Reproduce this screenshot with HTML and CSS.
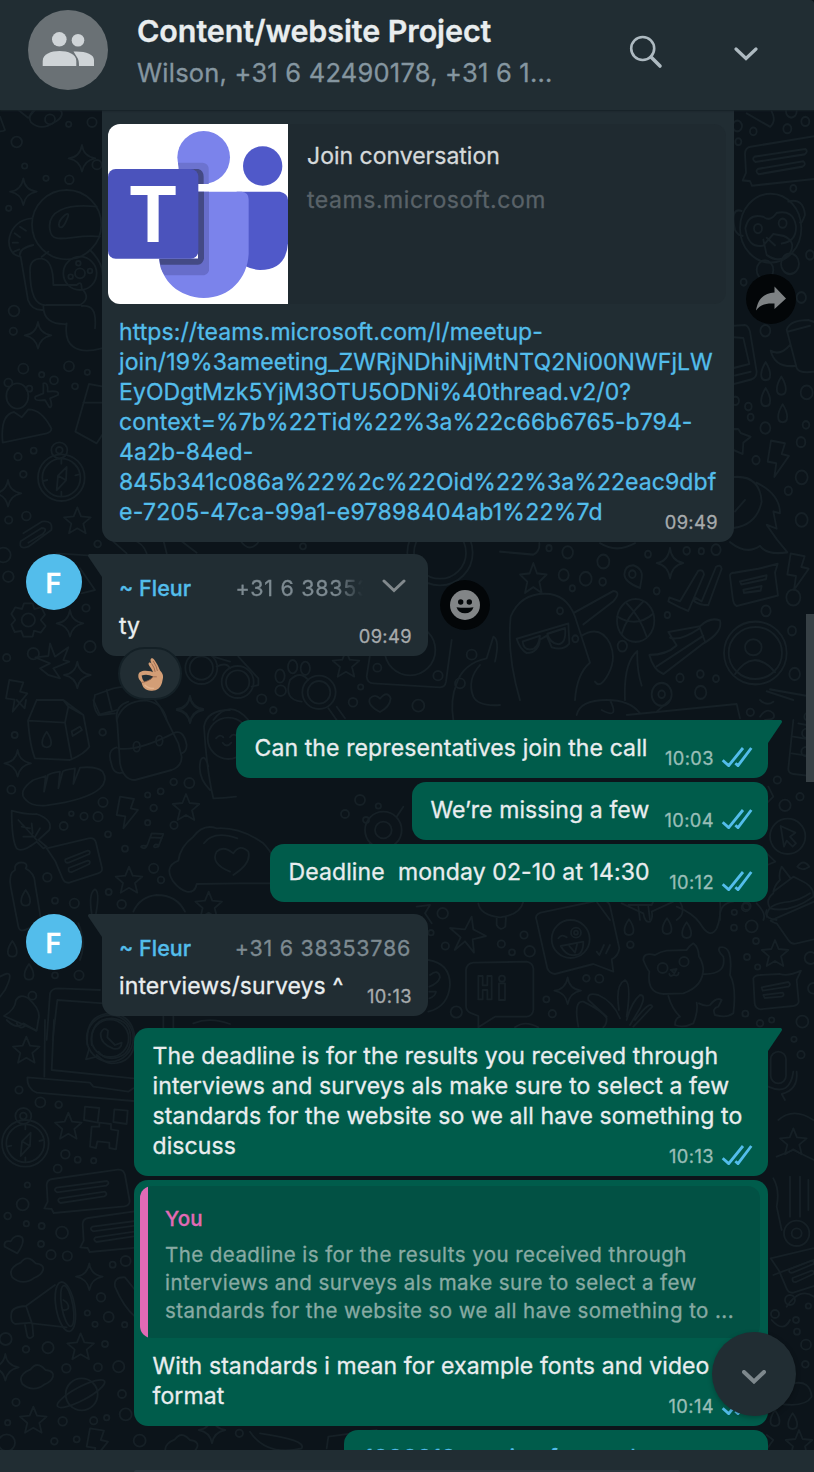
FILE: index.html
```html
<!DOCTYPE html>
<html lang="en">
<head>
<meta charset="utf-8">
<title>Content/website Project</title>
<link rel="stylesheet" href="styles.css">
</head>
<body>
<div class="app">
<header class="header">
  <svg class="group-avatar" viewBox="0 0 80 80"><circle cx="40" cy="40" r="40" fill="#6a7175"/><g fill="#cfd4d7"><circle cx="31.300000000000004" cy="29.3" r="7.3"/><circle cx="50" cy="30.3" r="6.3"/><path d="M14.700 56V51C14.700 44 23 41 31.500 41S48.300 44 48.300 51V56Z"/><path d="M45.500 41.600C50 49 51 49 51 56H66V50C66 44 57 41 45.500 41.600Z"/></g></svg>
  <div class="header-text">
    <div class="title">Content/website Project</div>
    <div class="members">Wilson, +31 6 42490178, +31 6 1...</div>
  </div>
  <svg class="icon-search" viewBox="0 0 34 34" fill="none" stroke="#aebac1"><circle cx="13.700" cy="13.500" r="11.500" stroke-width="2.600"/><path d="M22 22L31 31" stroke-width="3.600" stroke-linecap="round"/></svg>
  <svg class="icon-down" viewBox="0 0 24 14" fill="none" stroke="#aebac1" stroke-width="3.200" stroke-linecap="round"><path d="M2 2L12 11.500L22 2"/></svg>
</header>

<main class="chat">
<svg class="wallpaper" viewBox="0 110 814 1340" fill="none" stroke="#162026" stroke-width="5.500" stroke-linejoin="round" stroke-linecap="round">
  <defs>
    <path id="star" d="M0-40L11-13L40-10L18 9L25 38L0 23L-25 38L-18 9L-40-10L-11-13Z"/>
    <path id="spark" d="M0-40Q4-6 40 0Q6 6 0 40Q-6 6-40 0Q-6-4 0-40Z"/>
    <path id="drop" d="M0-25C18 0 18 22 0 22S-18 0 0-25Z"/>
    <path id="bolt" d="M-20-45L22-38L12-10L34-5L-10 50L-4 14L-30 10Z"/>
    <path id="cloud" d="M-45 22C-60-5-30-18-20-22C0-50 20-25 25-20C65-15 45 15 20 24C0 40-25 40-45 22Z"/>
    <g id="dots"><circle cx="0" cy="0" r="15"/><circle cx="55" cy="18" r="8"/><circle cx="18" cy="60" r="9"/><circle cx="-45" cy="42" r="12"/></g>
    <g id="note"><path d="M-78-25L48-55Q66-58 70-42L88 34Q90 46 76 50L-10 78Q-24 80-30 66L-52 14Z"/><path d="M-22 8L45-18Q55-18 50-8L-12 18Q-25 20-22 8ZM-12 34L45 12Q55 12 50 22L-2 46Q-15 48-12 34Z"/></g>
    <g id="talk"><path d="M-115-20Q-114-36-98-38L98-66Q116-68 120-50L134 28Q134 42 118 44L-94 64L-100 52L-122 50L-112 30Z"/><path d="M-86-12L66-32Q76-26 64-18L-84 2Q-96-6-86-12ZM-76 20L60 0Q70 8 58 14L-74 34Q-86 26-76 20Z"/></g>
    <g id="compass"><circle cx="0" cy="0" r="70"/><circle cx="0" cy="0" r="57"/><circle cx="-6" cy="-82" r="24"/><circle cx="-6" cy="-82" r="10"/><path d="M16-32L14 8L-14 38L-10-6ZM-10-6L14 8M0-55V-42M0 55V42M-54 10L-42 7M54-10L42-7"/></g>
  </defs>
  <g transform="translate(0 110) scale(.33333)">
    <path d="M55 0L85 24L105 0M0 20L15 60Q12 64 0 64M90 20V20"/>
    <use href="#cloud" x="138" y="15" transform="translate(0 0)"/><use href="#spark" x="246" y="145"/><use href="#spark" x="70" y="245"/><use href="#spark" x="114" y="676"/><use href="#spark" x="24" y="1150"/><use href="#star" x="232" y="1232" />
    <circle cx="150" cy="28" r="15"/><circle cx="276" cy="37" r="14"/><circle cx="50" cy="96" r="16"/><circle cx="206" cy="43" r="8"/><circle cx="74" cy="168" r="8"/><circle cx="138" cy="205" r="8"/><circle cx="208" cy="209" r="13"/><circle cx="291" cy="164" r="14"/><circle cx="26" cy="295" r="8"/><circle cx="42" cy="603" r="16"/><circle cx="40" cy="664" r="11"/>
    <circle cx="200" cy="344" r="104"/><path d="M150 360C140 305 195 280 290 290M150 360C155 410 220 370 300 380M178 350Q172 335 195 315Q210 305 202 325Q188 360 178 350ZM95 325C20 330 5 430 60 440M60 350L78 362M44 370L60 382M38 398H54M42 425L58 418M60 440Q55 415 100 405M62 440L84 570Q95 602 130 600M90 480Q90 445 125 446Q160 450 160 525H230Q245 510 245 535Q275 565 240 585H140Q90 590 90 480ZM130 588Q130 645 200 642M200 640C190 710 230 735 305 715M285 655C290 600 275 585 245 588M125 440L145 425M270 420Q310 460 308 495"/>
    <circle cx="240" cy="490" r="50"/><circle cx="240" cy="490" r="15"/><circle cx="212" cy="500" r="7"/><circle cx="235" cy="460" r="7"/><circle cx="270" cy="483" r="7"/>
    <use href="#dots" x="207" y="769"/><use href="#dots" x="70" y="776"/><ellipse cx="52" cy="858" rx="33" ry="38"/><path d="M8 998Q0 915 42 906L65 922L85 898Q125 898 154 955Q155 965 140 970Z"/><path d="M130 820Q145 815 143 845Q180 840 174 855L150 865Q160 892 148 892L135 870Q100 875 106 860L130 850Z"/><path d="M310 830L267 822L226 965L290 1000L310 970M250 878H305"/>
    <use href="#compass" x="184" y="1103"/><circle cx="54" cy="1040" r="11"/><circle cx="101" cy="1022" r="9"/><circle cx="70" cy="1093" r="10"/><circle cx="79" cy="1218" r="13"/><circle cx="26" cy="1230" r="11"/><path d="M70 1270L125 1235Q160 1230 154 1260L85 1310Q55 1320 62 1294L125 1254Q145 1255 128 1272L85 1298"/>
  </g>
  <g transform="translate(0 540) scale(.33333)">
    <circle cx="10" cy="45" r="22"/><circle cx="25" cy="110" r="16"/><circle cx="293" cy="12" r="10"/><circle cx="258" cy="204" r="11"/><path d="M150 80L170 40L320 50M240 85L285 150L245 160M340 5L380 40M400 0Q430 10 440 40M490 0L500 40M540 0L590 38M720 0Q750 45 780 0"/>
    <circle cx="85" cy="240" r="20"/><path d="M72 190H98L103 207L124 202L135 224L122 240L137 258L122 278L102 272L98 290H70L64 273L44 276L34 254L46 240L34 222L46 202L66 207Z"/><use href="#spark" x="210" y="250"/><use href="#spark" x="232" y="405"/><use href="#spark" x="570" y="507"/><circle cx="270" cy="320" r="17"/><circle cx="100" cy="341" r="17"/><circle cx="20" cy="353" r="11"/>
    <path d="M150 310L165 350L205 322L190 360L208 365L160 385L180 415L145 405L120 385L150 370L106 352L145 348Z"/><use href="#bolt" x="48" y="465"/>
    <path d="M285 465L340 445M320 520L350 510M285 465Q275 500 295 525L330 515M320 450L335 510M340 445Q420 430 450 450"/>
    <circle cx="604" cy="384" r="48"/><circle cx="604" cy="384" r="35"/><circle cx="713" cy="426" r="48"/><circle cx="713" cy="426" r="35"/><path d="M650 380Q680 365 690 385M715 350L775 415V435L755 440M640 350L690 365"/>
    <ellipse cx="840" cy="408" rx="14" ry="20"/><ellipse cx="878" cy="380" rx="14" ry="20"/><ellipse cx="916" cy="385" rx="14" ry="20"/><circle cx="842" cy="452" r="16"/><path d="M870 420Q900 390 925 420M870 420Q850 480 905 485"/><circle cx="957" cy="457" r="50"/><circle cx="957" cy="457" r="34"/><path d="M985 505L1010 540M1010 500L1035 535"/><path d="M1140 516Q1100 495 1110 475Q1125 460 1140 476Q1162 450 1172 475Q1170 500 1140 516Z"/><use href="#star" x="1038" y="372"/>
    <circle cx="785" cy="477" r="14"/><circle cx="820" cy="511" r="10"/><circle cx="1059" cy="487" r="13"/><circle cx="1082" cy="441" r="8"/><path d="M1110 345L1100 410Q1102 430 1120 430L1320 442Q1335 442 1338 425L1355 300"/><circle cx="1230" cy="330" r="76"/><circle cx="1132" cy="383" r="12"/><circle cx="1314" cy="407" r="14"/><circle cx="1255" cy="497" r="18"/><path d="M1360 540Q1350 480 1370 430Q1390 370 1460 355L1480 290Q1500 300 1485 365M1440 375Q1400 420 1420 470Q1435 500 1500 495"/>
    <circle cx="1320" cy="38" r="78"/><circle cx="1320" cy="38" r="98"/><circle cx="1380" cy="430" r="15"/><circle cx="1415" cy="344" r="15"/><circle cx="909" cy="19" r="9"/>
    <path d="M640 540Q690 475 745 540M350 540Q370 480 440 482Q490 490 500 540"/>
  </g>
  <g transform="translate(0 700) scale(.33333)">
    <path d="M110 0L84 62Q90 140 105 175L210 180Q255 160 268 140L250 45L190 0M110 0H190L205 20L195 68L84 62M195 68L215 178M205 20L250 45M215 94L240 80L246 90L218 108ZM50 0L74 25L78 0M280 0L300 45L345 40"/>
    <use href="#drop" x="140" y="120"/><use href="#spark" x="53" y="190"/><use href="#spark" x="570" y="30"/>
    <path d="M385 5Q340 20 352 70L360 190Q370 240 405 240L515 210Q545 200 545 170L535 130L480 20L465 0M355 145Q410 155 520 100M350 142Q320 150 334 190Q340 225 368 218M520 100Q550 85 560 135Q560 155 545 160"/><ellipse cx="410" cy="140" rx="10" ry="15"/><ellipse cx="478" cy="122" rx="10" ry="15"/>
    <path d="M100 240Q50 275 78 300Q95 320 140 316Q260 300 300 265Q325 240 308 215Q290 198 240 203L220 252L225 205Q190 210 188 215L175 265L180 215Q150 220 144 225L132 275L137 228Z"/>
    <path d="M640 295Q620 210 612 80Q620 30 690 30M630 270Q590 230 602 180Q615 160 625 200M640 295Q670 295 708 290"/><circle cx="685" cy="115" r="62"/><path d="M648 115Q660 100 670 112M690 112Q700 97 712 110M668 128Q680 145 694 128"/>
    <circle cx="44" cy="105" r="9"/><circle cx="308" cy="97" r="10"/><circle cx="34" cy="269" r="12"/><circle cx="521" cy="246" r="10"/><circle cx="568" cy="249" r="15"/><circle cx="482" cy="274" r="9"/><circle cx="443" cy="285" r="8"/><circle cx="309" cy="307" r="14"/><circle cx="294" cy="350" r="14"/><circle cx="252" cy="349" r="11"/><circle cx="214" cy="341" r="7"/><circle cx="191" cy="378" r="12"/><circle cx="461" cy="324" r="10"/><circle cx="443" cy="368" r="8"/><circle cx="522" cy="376" r="11"/><circle cx="324" cy="403" r="9"/><circle cx="375" cy="446" r="9"/>
    <path d="M35 332Q80 345 110 342Q160 360 148 390L115 420L140 440L130 445L110 425Q65 460 50 445Q35 420 35 332ZM55 360L110 420M95 370L98 400M65 380L90 385M70 410L100 410M120 385L105 410"/>
    <use href="#bolt" x="380" y="335"/><use href="#star" x="558" y="322" /><use href="#note" x="218" y="470"/>
    <path d="M440 438Q420 435 424 442Q435 450 442 435L455 400L490 402L475 440Q460 445 462 438Q465 430 476 436M452 412L486 414"/><use href="#star" x="387" y="540"/><use href="#star" x="626" y="615"/><circle cx="461" cy="505" r="14"/><circle cx="142" cy="532" r="13"/><circle cx="483" cy="540" r="10"/><circle cx="223" cy="610" r="14"/><circle cx="165" cy="602" r="9"/><circle cx="326" cy="576" r="9"/><circle cx="365" cy="613" r="13"/>
    <path d="M720 550L590 552Q585 580 560 575Q540 570 520 545Q490 500 535 482Q540 440 580 410Q610 370 650 385Q720 380 790 430Q830 470 850 550L720 550M612 430Q640 390 712 415M690 515Q630 490 650 455Q670 435 700 460Q720 430 745 455Q755 490 700 525"/>
    <path d="M45 500Q50 485 70 488Q85 492 77 505Q105 520 105 550L123 660Q60 710 55 680L32 560Q25 520 45 510Z"/><use href="#drop" x="77" y="595"/><path d="M275 640Q265 580 285 568Q300 575 288 640M400 635Q420 590 470 585Q530 585 555 635"/><use href="#drop" x="37" y="748"/><use href="#drop" x="87" y="817"/><circle cx="237" cy="826" r="14"/><circle cx="165" cy="826" r="9"/>
    <path d="M235 670Q260 730 240 780M0 830Q50 800 15 870L0 890M85 895Q125 930 115 960L110 992L12 948Q45 930 48 900Q60 880 85 895M50 970Q60 990 75 978M140 1020L150 880Q155 865 175 865L300 870M158 1020L172 900L310 910M490 950V1020M520 950V1020M580 970Q630 950 690 972"/><circle cx="97" cy="887" r="12"/><circle cx="330" cy="1015" r="70"/><circle cx="330" cy="1015" r="56"/>
  </g>
  <g transform="translate(0 1020) scale(.33333)">
    <path d="M135 0L133 170M162 0L155 150L400 175M400 205L385 215L280 200L270 188L82 172Q80 205 110 218L400 243M290 110L258 118L268 85M302 40Q310 18 324 32L322 52L345 75L365 68Q365 90 340 86Q300 70 302 40ZM20 0Q50 30 70 10L108 32"/><path d="M262 75Q255-20 335-20Q400-15 405 60Q400 130 335 130Q315 130 290 105"/><path d="M275 75Q270-5 335-5Q395 0 392 60Q388 112 335 115Q310 115 295 95"/>
    <use href="#star" x="79" y="90"/><use href="#star" x="205" y="318"/><use href="#compass" x="76" y="370"/><path d="M255 260L298 264L293 308L252 300ZM343 268L383 272L380 312L340 306ZM275 320H298V308L333 312V328L355 332L348 388L328 384V368L292 364L288 384L270 380Z"/>
    <circle cx="121" cy="247" r="15"/><circle cx="57" cy="210" r="11"/><circle cx="176" cy="254" r="10"/><circle cx="196" cy="403" r="13"/><circle cx="233" cy="419" r="9"/><circle cx="281" cy="422" r="8"/><circle cx="173" cy="446" r="12"/><circle cx="68" cy="553" r="18"/><circle cx="82" cy="495" r="8"/><circle cx="23" cy="588" r="10"/><circle cx="79" cy="611" r="8"/><circle cx="125" cy="618" r="9"/><circle cx="186" cy="638" r="18"/><circle cx="123" cy="672" r="9"/><circle cx="153" cy="704" r="14"/><circle cx="202" cy="708" r="14"/><circle cx="377" cy="723" r="15"/><circle cx="338" cy="734" r="9"/>
    <use href="#talk" x="255" y="515"/><use href="#talk" x="363" y="632"/><path d="M52 700L14 680Q10 660 32 664Q45 640 66 652Q76 665 52 700Z"/><use href="#cloud" x="82" y="750"/><use href="#spark" x="268" y="770"/>
    <path d="M78 858L165 795M95 910L200 922M78 858L95 908L45 912Q30 905 34 880Q36 860 78 858ZM75 915L82 950Q90 960 100 948L97 912M190 840Q208 850 205 865Q198 872 190 870"/><ellipse cx="196" cy="860" rx="28" ry="75" transform="rotate(-10 196 860)"/><ellipse cx="202" cy="858" rx="17" ry="62" transform="rotate(-10 202 858)"/>
    <path d="M405 890Q370 860 345 800Q340 770 375 772L405 810"/><circle cx="303" cy="832" r="13"/><circle cx="262" cy="879" r="8"/><circle cx="326" cy="891" r="15"/><circle cx="285" cy="913" r="8"/><circle cx="374" cy="914" r="8"/><circle cx="17" cy="957" r="18"/><circle cx="144" cy="983" r="17"/><circle cx="78" cy="988" r="10"/><circle cx="315" cy="972" r="9"/><use href="#star" x="242" y="980"/><use href="#spark" x="16" y="1042"/><use href="#cloud" x="112" y="1070"/><circle cx="199" cy="1045" r="13"/><circle cx="294" cy="1042" r="12"/><circle cx="356" cy="1040" r="17"/><circle cx="245" cy="1123" r="48"/><ellipse cx="243" cy="1121" rx="80" ry="20" transform="rotate(-28 243 1121)"/><use href="#star" x="100" y="1200"/><circle cx="188" cy="1204" r="13"/><circle cx="366" cy="1122" r="12"/><circle cx="48" cy="1147" r="11"/><circle cx="377" cy="1183" r="18"/><circle cx="281" cy="1202" r="11"/><circle cx="320" cy="1193" r="8"/><circle cx="23" cy="1208" r="8"/><circle cx="20" cy="1268" r="25"/><circle cx="163" cy="1264" r="10"/><circle cx="230" cy="1258" r="9"/><use href="#bolt" x="290" y="1270"/><circle cx="419" cy="1262" r="18"/><use href="#cloud" x="545" y="1280"/><path d="M750 1235Q800 1310 905 1285Q920 1260 780 1240M980 1285L985 1250L1130 1230"/><use href="#spark" x="636" y="1230"/><circle cx="718" cy="1240" r="11"/>
  </g>
  <g transform="translate(400 900) scale(.33333)">
    <circle cx="128" cy="40" r="16"/><circle cx="93" cy="98" r="8"/><circle cx="136" cy="138" r="11"/><path d="M50 20L90 15L75 40L95 70M235 10Q240 45 300 52Q360 45 370 5M290 52V75Q300 95 316 80L318 50"/>
    <path d="M215 50L220 88L258 108L218 118L222 158L195 124L164 150L182 112L150 84L195 88Z"/><path d="M410 62Q402 45 422 38L602 0Q625 0 630 18L658 145Q655 168 635 178L640 215L580 192L465 222Q448 220 442 205Z"/><circle cx="512" cy="117" r="57"/><circle cx="528" cy="98" r="15"/><circle cx="528" cy="98" r="6"/><path d="M475 115Q485 100 500 112M482 138L550 125Q550 165 525 165Q500 170 482 138ZM508 138L525 158L532 130M590 155L598 165L612 135M618 160L630 135"/>
    <path d="M220 188L380 185Q398 188 400 205V330Q398 348 380 350H285L235 382V348L215 340Q198 335 198 318V210Q200 190 220 188ZM235 228H248V256H262V228H275V298H262V270H248V298H235ZM297 250H315V300H297Z"/><circle cx="306" cy="236" r="9"/><circle cx="372" cy="105" r="11"/><circle cx="304" cy="132" r="11"/><circle cx="336" cy="157" r="9"/><circle cx="389" cy="154" r="16"/><circle cx="559" cy="235" r="10"/><circle cx="598" cy="236" r="12"/><circle cx="439" cy="298" r="9"/><circle cx="457" cy="341" r="11"/><circle cx="169" cy="336" r="17"/><use href="#spark" x="503" y="272"/>
    <path d="M85 180Q150 190 150 255Q145 320 85 335M90 225Q115 205 120 232Q115 250 88 260M88 275H108Q105 290 88 295M345 382Q375 360 415 382M535 380Q520 300 550 305Q610 335 620 355Q620 375 610 382M620 350L565 300Q560 275 595 285Q640 305 660 355M657 330Q645 255 675 240Q695 250 680 350M680 360Q695 305 720 285Q740 285 720 325L690 375M705 360Q750 300 757 320L700 380"/>
    <path d="M665 10L730 40Q735 70 750 65Q760 50 755 35L820 5M830 20Q880 40 900 70Q930 120 950 85Q965 50 960 0"/><use href="#drop" x="687" y="83"/><use href="#drop" x="801" y="80"/><use href="#drop" x="860" y="92"/><circle cx="691" cy="134" r="10"/>
    <path d="M765 165Q730 155 730 180Q740 205 748 215Q740 280 790 282L850 280Q910 260 910 205Q905 180 897 170Q895 140 880 130Q865 140 860 150L800 152Q780 155 765 165M910 222Q980 225 970 170Q950 150 960 142Q1000 135 990 225Q1010 260 1000 340Q980 355 945 345Q935 325 955 320L965 300Q950 290 930 315Q915 320 897 310M805 288Q815 325 840 350Q825 355 825 375Q850 385 880 370Q895 335 890 308"/><circle cx="788" cy="204" r="15"/><circle cx="852" cy="185" r="14"/><path d="M812 210L830 207L823 220L815 212M820 225Q810 232 808 222M822 225Q835 230 836 218"/>
    <use href="#star" x="1125" y="160"/><path d="M1060 235Q1065 225 1080 225L1140 222Q1165 230 1203 212L1190 240L1196 305Q1195 315 1180 318L1082 328Q1066 326 1064 310ZM1085 262L1165 246Q1175 254 1165 260L1088 272ZM1090 285L1148 278Q1155 286 1145 290L1094 294Z"/><path d="M1100 50Q1100 10 1170 5Q1200 0 1230-20M1112 62L1242 5M1112 62Q1125 70 1130 70L1165 120Q1175 135 1190 130L1242 118"/>
    <circle cx="1055" cy="79" r="18"/><circle cx="1002" cy="83" r="9"/><circle cx="1037" cy="22" r="12"/><circle cx="1068" cy="123" r="9"/><circle cx="1041" cy="171" r="9"/><circle cx="1073" cy="201" r="8"/><circle cx="1232" cy="174" r="18"/><circle cx="1240" cy="265" r="16"/><circle cx="1036" cy="341" r="9"/><circle cx="1080" cy="370" r="10"/><circle cx="1115" cy="360" r="8"/><circle cx="1207" cy="365" r="18"/><circle cx="1182" cy="418" r="8"/><circle cx="1203" cy="464" r="11"/><rect x="1112" y="455" width="46" height="95" rx="23"/><path d="M1105 560Q1170 590 1180 515M1190 515Q1195 570 1145 582L1155 600"/>
  </g>
  <g transform="translate(560 700) scale(.33333)">
    <path d="M50 45Q60 0 140 0M140 0Q210 0 240 40M150 0Q180 60 125 30M200 45L530 12L540 55M290 35L330 0M600 50Q620 20 640 40Q650 60 615 60M600 0Q620 20 640 5M700 60L685 205Q684 220 700 222L770 230M715 70L740 75M700 110L760 120M695 160L760 170"/><circle cx="571" cy="37" r="11"/><circle cx="740" cy="100" r="14"/><circle cx="738" cy="155" r="14"/><circle cx="745" cy="50" r="12"/>
    <circle cx="683" cy="409" r="53"/><path d="M662 378L706 398L690 410L708 430L698 440L680 422L672 440ZM625 260L640 290L620 310M620 460L646 485L622 495M712 500Q730 475 748 500Q725 515 712 500ZM665 500L692 535M665 500Q655 520 660 540Q640 560 640 580Q615 600 630 625Q690 640 760 590Q765 560 720 540L700 530L640 575M620 630Q610 655 650 660"/><circle cx="652" cy="240" r="11"/><circle cx="675" cy="316" r="17"/><circle cx="720" cy="290" r="11"/>
    <path d="M480 660Q475 610 520 605M110 605L150 660M205 615H275L280 605M235 620L240 660M265 620L270 660M350 660Q380 640 360 605M590 610Q620 640 610 660"/><circle cx="523" cy="637" r="8"/><circle cx="560" cy="618" r="12"/>
    <use href="#dots" x="-600" y="300"/><circle cx="-530" cy="390" r="55"/><circle cx="-530" cy="390" r="25"/><path d="M-570 430L-590 460M-490 350L-470 320"/>
  </g>
  <g transform="translate(500 100) scale(.33333 .3827)">
    <path d="M740 35L810 70Q830 55 815 30M702 80V80"/><circle cx="712" cy="68" r="14"/><circle cx="760" cy="82" r="10"/><circle cx="874" cy="30" r="16"/><circle cx="862" cy="75" r="12"/><circle cx="916" cy="56" r="12"/><circle cx="715" cy="109" r="9"/><use href="#talk" x="850" y="160"/>
    <ellipse cx="812" cy="335" rx="92" ry="90"/><path d="M736 335Q745 295 790 305Q810 320 830 295Q880 285 888 330Q890 370 845 375M736 335Q745 390 790 380L820 350L850 355Q890 370 870 400Q840 430 800 405L790 365M800 360L825 380M725 290Q690 280 705 340Q715 355 728 355M865 265Q910 255 915 300Q905 325 900 320"/><circle cx="774" cy="336" r="12"/><circle cx="848" cy="322" r="12"/><circle cx="795" cy="444" r="25"/><circle cx="870" cy="428" r="27"/><circle cx="880" cy="231" r="9"/><circle cx="930" cy="405" r="12"/><circle cx="731" cy="476" r="9"/><circle cx="904" cy="516" r="14"/><circle cx="796" cy="603" r="15"/>
    <path d="M702 590L735 588Q745 590 750 605L770 710Q770 725 755 730L702 742M702 620L730 622L748 690L702 700M705 720L752 710M860 600Q870 575 925 575L942 580M860 600L890 700Q895 715 942 710M865 605L930 590M870 640Q840 670 812 655Q825 700 885 695"/><use href="#drop" x="797" y="710"/><use href="#drop" x="844" y="748"/><use href="#drop" x="797" y="778"/><use href="#drop" x="848" y="820"/><circle cx="920" cy="764" r="18"/><circle cx="706" cy="786" r="11"/><circle cx="745" cy="801" r="10"/><circle cx="752" cy="829" r="9"/><circle cx="796" cy="857" r="15"/><circle cx="918" cy="849" r="10"/><circle cx="903" cy="894" r="13"/><circle cx="768" cy="941" r="11"/><path d="M702 860L715 860L722 870L752 880L730 895L728 925L702 915"/><use href="#bolt" x="833" y="935"/><circle cx="905" cy="986" r="18"/><circle cx="865" cy="1021" r="11"/><circle cx="905" cy="1097" r="18"/>
    <path d="M702 985Q780 980 785 1050Q770 1110 702 1118M735 1045L705 1075M770 1000Q840 1030 840 1080L820 1075L830 1120L800 1110Q830 1150 862 1182Q800 1190 780 1165Q740 1190 690 1155M0 1180L100 1188Q120 1180 118 1158M300 1158Q350 1185 405 1158"/>
    <use href="#star" x="100" y="1250"/><circle cx="203" cy="1182" r="16"/><circle cx="147" cy="1171" r="8"/><circle cx="310" cy="1206" r="18"/><circle cx="191" cy="1241" r="15"/><circle cx="257" cy="1251" r="18"/><circle cx="308" cy="1259" r="10"/><circle cx="217" cy="1276" r="8"/><path d="M373 1240Q375 1215 400 1216Q430 1225 425 1250L420 1275Q375 1260 373 1240Z"/><circle cx="397" cy="1239" r="10"/><use href="#spark" x="510" y="1210"/><circle cx="444" cy="1187" r="9"/><circle cx="560" cy="1178" r="10"/><circle cx="604" cy="1179" r="8"/><circle cx="648" cy="1175" r="14"/><circle cx="470" cy="1283" r="9"/>
    <path d="M508 1300L540 1310L595 1230Q610 1225 612 1240L565 1335Q535 1325 505 1310ZM585 1300L605 1310L648 1220Q662 1212 665 1225L625 1320Q600 1320 583 1310ZM690 1245Q688 1235 705 1235L775 1225L833 1212L825 1235L834 1295L710 1322Q700 1318 698 1300ZM720 1258L800 1242L798 1252L724 1266ZM730 1280L785 1270L782 1282L732 1288Z"/><use href="#bolt" x="892" y="1230"/><circle cx="880" cy="1300" r="21"/><circle cx="798" cy="1335" r="14"/>
    <path d="M60 1568Q20 1450 32 1350Q60 1290 135 1290Q200 1290 225 1350L270 1470Q230 1500 225 1568M50 1408L205 1368L208 1420Q190 1440 155 1430L140 1400L120 1410Q115 1445 80 1445Q60 1435 50 1408ZM68 1415L120 1400Q115 1435 90 1436Q70 1435 68 1415ZM142 1395L195 1380Q200 1420 175 1422Q150 1420 142 1395ZM222 1340L340 1283Q365 1285 340 1310L250 1370M245 1400Q300 1370 330 1420Q350 1460 325 1500Q300 1540 285 1520M375 1568Q370 1470 412 1440Q410 1490 425 1530"/><circle cx="407" cy="1360" r="56"/><path d="M352 1350Q410 1380 460 1342M380 1315Q420 1350 440 1402M430 1310Q380 1350 365 1395"/><circle cx="367" cy="1427" r="14"/><circle cx="502" cy="1346" r="8"/><circle cx="180" cy="1335" r="9"/><circle cx="226" cy="1408" r="9"/>
    <path d="M505 1390L600 1375Q630 1350 660 1360Q670 1390 610 1420L490 1500Q460 1490 448 1450Q500 1450 530 1425ZM510 1405Q540 1415 600 1380M470 1480L610 1400M600 1380L615 1415"/><ellipse cx="766" cy="1445" rx="94" ry="82"/><ellipse cx="766" cy="1445" rx="80" ry="68"/><ellipse cx="760" cy="1430" rx="25" ry="21"/><path d="M705 1500Q760 1430 825 1495"/><circle cx="485" cy="1553" r="30"/><circle cx="485" cy="1553" r="10"/><circle cx="540" cy="1510" r="11"/><circle cx="601" cy="1500" r="10"/><circle cx="602" cy="1548" r="17"/><circle cx="648" cy="1512" r="9"/><circle cx="884" cy="1500" r="16"/><circle cx="876" cy="1387" r="12"/><path d="M810 1540L940 1560M800 1545L880 1568"/>
  </g>
  <g transform="translate(560 1100) scale(.33333)">
    <path d="M655 60Q700 20 760 60M650 170L700 150L762 180M640 235Q660 270 650 320L665 390M690 230V350M720 230V350M745 240V330M640 525L760 480M680 620Q720 560 762 590"/><use href="#star" x="700" y="125"/><circle cx="710" cy="400" r="38"/><circle cx="710" cy="400" r="15"/><use href="#note" x="710" y="500"/><use href="#dots" x="690" y="600"/><circle cx="738" cy="734" r="15"/><circle cx="711" cy="695" r="9"/><circle cx="736" cy="793" r="10"/><path d="M635 660Q670 700 690 660M700 850Q750 840 755 890Q735 925 650 910"/><use href="#drop" x="645" y="956"/><use href="#drop" x="698" y="965"/><use href="#star" x="717" y="1030"/><path d="M620 1005L640 1020L622 1045"/>
  </g>
</svg>

<section class="messages">
  <article class="bubble in link-message">
    <div class="preview">
      <svg class="teams" viewBox="54 72 540 540"><rect x="54" y="72" width="540" height="540" fill="#fff"/><circle cx="518" cy="198" r="59" fill="#5059c9"/><path d="M440 275H570Q594 280 594 300V430Q588 510 510 510Q470 508 440 480Z" fill="#5059c9"/><circle cx="341" cy="172" r="79" fill="#7b83eb"/><path d="M324 275H455Q476 277 476 298V462C472 535 420 594 341 594C265 590 215 545 208 476H324Z" fill="#7b83eb"/><path d="M264 188H338Q356 190 356 208V252H342Q292 247 266 207Z" fill="#6c73cf"/><path d="M324 275H357V512Q352 526 335 526H224Q208 505 208 476H324Z" fill="#676dca"/><path d="M286 207H325Q341 212 341 230V252H324L307 230ZM324 275H342V476Q338 493 324 494H211L208 476H324Z" fill="#444a85"/><rect x="54" y="207" width="271" height="269" rx="23" fill="#4b53bc"/><text class="teams-letter" x="119" y="427" textLength="140" lengthAdjust="spacingAndGlyphs">T</text></svg>
      <div class="preview-copy"><div class="preview-title">Join conversation</div><div class="preview-site">teams.microsoft.com</div></div>
    </div>
    <p class="url">https://teams.microsoft.com/l/meetup-<br>join/19%3ameeting_ZWRjNDhiNjMtNTQ2Ni00NWFjLW<br>EyODgtMzk5YjM3OTU5ODNi%40thread.v2/0?<br>context=%7b%22Tid%22%3a%22c66b6765-b794-<br>4a2b-84ed-<br>845b341c086a%22%2c%22Oid%22%3a%22eac9dbf<br><span class="url-end">e-7205-47ca-99a1-e97898404ab1%22%7d</span></p>
    <span class="meta">09:49</span>
    <svg class="forward" viewBox="0 0 50 50"><circle cx="25" cy="25" r="25" fill="#030608"/><path d="M10 36.500C12 25 17 19.500 28.500 18.500V12.500L40 24.500L28.500 35V29.500C19 29 14 31 10 36.500Z" fill="#7e8284"/></svg>
  </article>

  <div class="row">
    <div class="avatar">F</div>
    <article class="bubble in named">
      <svg class="tail-left" viewBox="0 0 14 23"><path d="M14 0H2C0 0-.5 1.500.5 3L14 23Z" fill="#212d33"/></svg>
      <div class="sender"><b>~ Fleur</b><span class="phone faded">+31 6 38353</span><svg class="menu" viewBox="0 0 24 14" fill="none" stroke="#82898d" stroke-width="3" stroke-linecap="round"><path d="M2 2L12 11.500L22 2"/></svg></div>
      <p class="text">ty</p><span class="meta">09:49</span>
      <svg class="smile" viewBox="0 0 50 50"><circle cx="25" cy="25" r="25" fill="#030608"/><circle cx="25" cy="25" r="15" fill="#828587"/><circle cx="20.700" cy="22" r="2.700" fill="#030608"/><circle cx="29.300" cy="22" r="2.700" fill="#030608"/><path d="M16.500 27.300Q25 28.300 33.500 27.300Q31.500 33.300 25 33.300T16.500 27.300Z" fill="#030608"/></svg>
      <div class="reaction"><svg class="hand" viewBox="410 348 82 106"><path d="M414 404C414 390 430 387 452 391L458 394C458 386 447 377 445 369C446 363 450 364 455 369C449 359 450 351 457 352C463 354 475 376 480 389C487 397 490 403 489 411L486 426C481 443 470 451 453 450C434 450 427 439 424 425C417 417 413 412 414 404Z" fill="#d39e76"/><path d="M424 404Q440 398 459 407Q456 416 432 424Q425 414 424 404Z" fill="#212d33"/><path d="M455 369Q464 381 465 393M459 360Q470 376 472 390M424 425Q446 423 459 408L470 408" fill="none" stroke="#94634a" stroke-width="2.500"/><path d="M433 432Q443 444 462 443" stroke="#e3b48e" stroke-width="4" fill="none"/></svg></div>
    </article>
  </div>

  <article class="bubble out first can"><svg class="tail-right" viewBox="0 0 14 23"><path d="M0 0H12C14 0 14.500 1.500 13.500 3L0 23Z" fill="#005c4b"/></svg><p class="text">Can the representatives join the call</p><span class="meta">10:03<svg class="ticks" viewBox="482 138 96 64"><path d="M487 181L505 197L548 144M525 190L533 197L573 144"/></svg></span></article>
  <article class="bubble out missing"><p class="text">We’re missing a few</p><span class="meta">10:04<svg class="ticks" viewBox="482 138 96 64"><path d="M487 181L505 197L548 144M525 190L533 197L573 144"/></svg></span></article>
  <article class="bubble out deadline"><p class="text">Deadline&nbsp; monday 02-10 at 14:30</p><span class="meta">10:12<svg class="ticks" viewBox="482 138 96 64"><path d="M487 181L505 197L548 144M525 190L533 197L573 144"/></svg></span></article>

  <div class="row second">
    <div class="avatar">F</div>
    <article class="bubble in named">
      <svg class="tail-left" viewBox="0 0 14 23"><path d="M14 0H2C0 0-.5 1.500.5 3L14 23Z" fill="#212d33"/></svg>
      <div class="sender"><b>~ Fleur</b><span class="phone">+31 6 38353786</span></div>
      <p class="text">interviews/surveys ^</p><span class="meta">10:13</span>
    </article>
  </div>

  <article class="bubble out first long"><svg class="tail-right" viewBox="0 0 14 23"><path d="M0 0H12C14 0 14.500 1.500 13.500 3L0 23Z" fill="#005c4b"/></svg><p class="text">The deadline is for the results you received through<br>interviews and surveys als make sure to select a few<br>standards for the website so we all have something to<br>discuss</p><span class="meta">10:13<svg class="ticks" viewBox="482 138 96 64"><path d="M487 181L505 197L548 144M525 190L533 197L573 144"/></svg></span></article>
  <article class="bubble out reply">
    <div class="quote"><b>You</b><p>The deadline is for the results you received through<br>interviews and surveys als make sure to select a few<br>standards for the website so we all have something to ...</p></div>
    <p class="text">With standards i mean for example fonts and video<br>format</p><span class="meta">10:14<svg class="ticks" viewBox="482 138 96 64"><path d="M487 181L505 197L548 144M525 190L533 197L573 144"/></svg></span>
  </article>
  <article class="bubble out last"><p class="text">1000019 version for read</p></article>
</section>
<div class="scrollbar"></div>
<div class="jump"><svg viewBox="0 0 24 14" fill="none" stroke="#7e888d" stroke-width="4" stroke-linecap="round"><path d="M2 2L12 11.500L22 2"/></svg></div>
</main>
<footer class="composer"><div class="field"></div></footer>
</div>
</body>
</html>
```
FILE: styles.css
```css
* { box-sizing: border-box; }
body { margin: 0; background: #0c141a; font-family: Inter, "Liberation Sans", sans-serif; -webkit-text-stroke: .3px currentColor; }
p { margin: 0; }
.app { width: 814px; height: 1472px; display: flex; flex-direction: column; overflow: hidden; }

.header { height: 110px; flex: none; display: flex; align-items: flex-start; background: #212d33; padding: 10px 0 0 28px; z-index: 2; box-shadow: 0 1px 2px #172126; border-top-right-radius: 4px; }
.group-avatar { width: 80px; height: 80px; }
.header-text { width: 492px; margin-left: 29px; white-space: nowrap; }
.title { color: #e9edef; font-size: 30.500px; font-weight: 600; line-height: 42px; letter-spacing: -.1px; }
.members { color: #8596a0; font-size: 25.500px; line-height: 42px; letter-spacing: .22px; }
.icon-search { width: 34px; height: 34px; margin-top: 25px; }
.icon-down { width: 24px; height: 14px; margin: 37px 0 0 71px; }

.chat { position: relative; height: 1340px; flex: none; overflow: hidden; background: #0c141a; }
.wallpaper { position: absolute; left: 0; top: 0; width: 814px; height: 1340px; }
.messages { position: relative; display: flex; flex-direction: column; align-items: flex-start; gap: 4px; }

.bubble { position: relative; border-radius: 14px; color: #e9edef; white-space: nowrap; }
.in { background: #212d33; }
.out { background: #005c4b; align-self: flex-end; margin-right: 46px; padding: 13px 18px 15px; }
.text { font-size: 23px; line-height: 30px; letter-spacing: .11px; }
.meta { position: absolute; right: 16px; bottom: 9px; display: flex; align-items: center; gap: 8px; font-size: 18.300px; line-height: 22px; letter-spacing: .4px; color: #a7abad; }
.out .meta { right: 15px; color: #99beb7; }
.ticks { width: 32px; height: 21.300px; margin: -3px 0 0 -1px; fill: none; stroke: #53bdeb; stroke-width: 8.500; }
.tail-left { position: absolute; left: -14px; top: 0; width: 14px; height: 23px; }
.tail-right { position: absolute; right: -14px; top: 0; width: 14px; height: 23px; }

.link-message { width: 632px; height: 432px; margin-left: 102px; padding: 14px 6px 15px; border-radius: 0 0 14px 14px; }
.preview { display: flex; height: 180px; width: 618px; border-radius: 12px; overflow: hidden; background: #1f2a30; }
.teams { width: 180px; height: 180px; }
.teams-letter { font: bold 247px "Liberation Sans", sans-serif; fill: #fff; -webkit-text-stroke: 0; }
.preview-copy { padding: 17px 0 0 19px; }
.preview-title { color: #d5d9db; font-size: 23px; line-height: 30px; letter-spacing: 0; }
.preview-site { margin-top: 14px; color: #596268; font-size: 23px; line-height: 30px; letter-spacing: .55px; }
.url { margin: 13px 0 0 11px; color: #53bdeb; font-size: 23px; line-height: 30px; letter-spacing: .08px; }
.url-end { letter-spacing: .25px; }
.forward { position: absolute; left: 644px; top: 164px; width: 50px; height: 50px; }

.row { display: flex; align-items: flex-start; gap: 20px; margin: 8px 0 0 26px; }
.avatar { width: 56px; height: 56px; padding-right: 1px; border-radius: 50%; background: #53bdeb; color: #fff; font-size: 27px; line-height: 59px; text-align: center; font-weight: 600; }
.named { width: 326px; height: 102px; padding: 19px 17px 0; border-top-left-radius: 0; }
.sender { display: flex; align-items: center; height: 30px; font-size: 21.500px; margin-bottom: 8px; }
.sender b { width: 116.500px; color: #53bdeb; font-weight: 500; }
.phone { color: #7d8a91; letter-spacing: .72px; }
.faded { width: 129px; mask-image: linear-gradient(90deg, #000 100px, transparent 127px); }
.menu { width: 24px; height: 14px; margin: -5px 0 0 17.500px; }
.smile { position: absolute; left: 338px; top: 26px; width: 50px; height: 50px; }
.reaction { position: absolute; left: 16px; top: 93px; width: 64px; height: 53px; border: 2px solid #142026; border-radius: 27px; background: #212d33; display: flex; align-items: center; justify-content: center; }
.hand { width: 27px; height: 35px; margin: 1px 0 0 1px; }

.first { border-top-right-radius: 0; }
.can { width: 532px; height: 58px; margin-top: 60px; }
.missing { width: 356px; height: 58px; }
.deadline { width: 498px; height: 58px; }
.long { width: 634px; height: 148px; margin-top: 8px; }
.out .text { margin-left: .5px; }
.reply { width: 634px; height: 246px; padding: 6px; }
.quote { width: 620px; height: 152px; padding: 19px 0 0 25px; border-radius: 12px; background: linear-gradient(90deg, #e26ab6 8px, #025144 8px); }
.quote b { display: block; color: #e26ab6; font-size: 20.500px; font-weight: 500; line-height: 28px; height: 36px; letter-spacing: .2px; }
.quote p { color: #88aaa3; font-size: 20.500px; line-height: 28px; letter-spacing: .44px; }
.reply .text { margin: 13px 0 0 12.500px; }
.last { width: 424px; height: 58px; }
.last .text { color: #53bdeb; margin-left: 2px; }
.scrollbar { position: absolute; right: 0; top: 504px; width: 8px; height: 168px; background: #374045; }
.jump { position: absolute; left: 712px; top: 1222px; width: 84px; height: 84px; border-radius: 50%; background: #212d33; box-shadow: 0 2px 5px rgba(0, 0, 0, .25); display: flex; align-items: center; justify-content: center; }
.jump svg { width: 24px; height: 14px; margin-top: 5px; }
.composer { height: 22px; background: #212d33; padding: 20px 134px 0; }
.field { height: 2px; background: #2a373e; border-radius: 8px 8px 0 0; }
```
